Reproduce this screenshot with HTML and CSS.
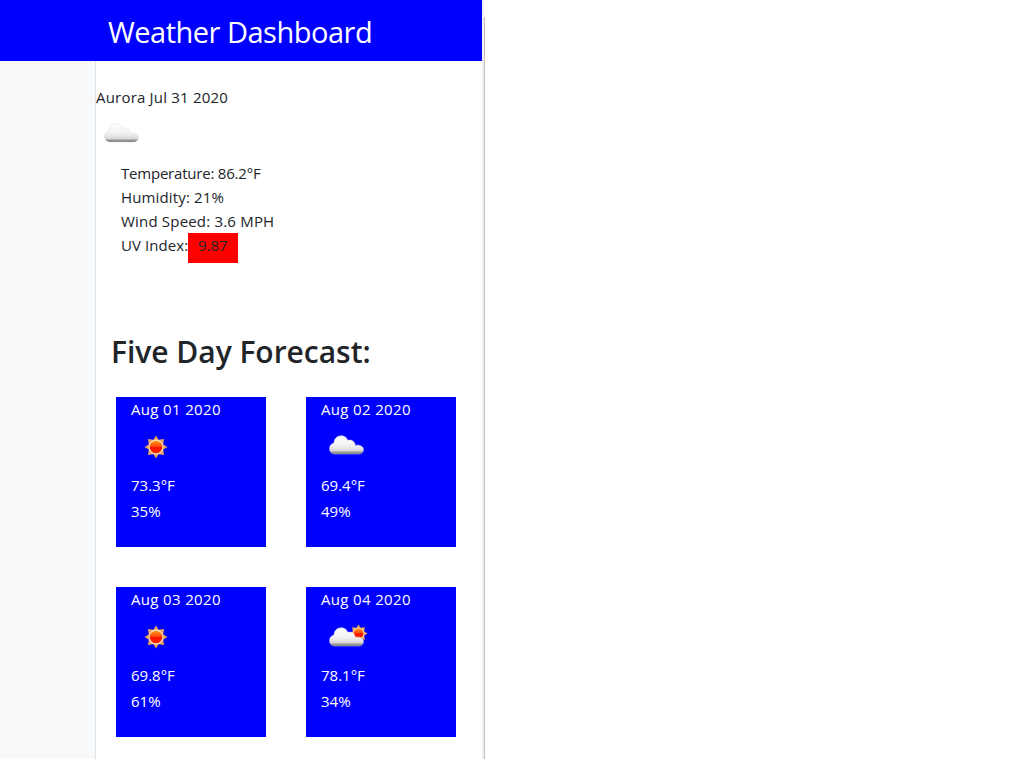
FILE: index.html
```html
<!DOCTYPE html>
<html lang="en">
<head>
<meta charset="utf-8">
<title>Weather Dashboard</title>
<link rel="stylesheet" href="styles.css">
</head>
<body>
<svg class="defs" width="0" height="0" aria-hidden="true">
  <defs>
    <linearGradient id="cloudFill" x1="0" y1="0" x2="0" y2="1">
      <stop offset="0" stop-color="#fff"/>
      <stop offset=".5" stop-color="#f3f3f3"/>
      <stop offset=".8" stop-color="#dcdcdc"/>
      <stop offset=".9" stop-color="#a0a0a0"/>
      <stop offset="1" stop-color="#606060"/>
    </linearGradient>
    <linearGradient id="sunFill" x1="0" y1="0" x2="0" y2="1">
      <stop offset="0" stop-color="#ff9a20"/>
      <stop offset=".45" stop-color="#ff4a08"/>
      <stop offset=".55" stop-color="#fa1000"/>
      <stop offset="1" stop-color="#ff2a00"/>
    </linearGradient>
    <symbol id="cloud" viewBox="0 0 35 20">
      <path d="M6 19C2.500 19 .5 16.500 .5 13.500C.5 10.500 2.500 8.500 5 8C5 3.500 8.500 .7 12.200 .7C15.500 .7 17.800 2.600 18.800 5.300C22.500 4.200 26 6.500 26.300 10.500C30.500 9.300 34.500 11.300 34.500 14.500C34.500 17.200 32.500 19 29.500 19Z" fill="url(#cloudFill)" stroke="#d8d8d8" stroke-width=".5"/>
    </symbol>
    <symbol id="sun" viewBox="-12 -12 24 24">
      <path d="M0-11.500 2.500-7.200 8-8 7.200-2.500 11.500 0 7.200 2.500 8 8 2.500 7.200 0 11.500-2.500 7.200-8 8-7.200 2.500-11.500 0-7.200-2.500-8-8-2.500-7.200Z" fill="#e9a25f"/>
      <circle r="7.400" fill="#ffe5b5"/>
      <circle r="6.300" fill="url(#sunFill)"/>
    </symbol>
  </defs>
</svg>
<div class="app">
  <div class="page">
    <header class="header"><h1 class="title">Weather Dashboard</h1></header>
    <div class="body">
      <aside class="sidebar"></aside>
      <main class="main">
        <p class="city">Aurora Jul 31 2020</p>
        <svg class="icon current-icon" viewBox="0 0 50 50"><use href="#cloud" x="8" y="15" width="35" height="20"/></svg>
        <ul class="stats">
          <li class="temperature">Temperature: 86.2°F</li>
          <li class="humidity">Humidity: 21%</li>
          <li class="wind">Wind Speed: 3.6 MPH</li>
          <li class="uv"><span class="uv-label">UV Index:</span><span class="uv-value">9.87</span></li>
        </ul>
        <h2 class="forecast-title">Five Day Forecast:</h2>
        <div class="forecast">
          <section class="card">
            <p class="date">Aug 01 2020</p>
            <svg class="icon" viewBox="0 0 50 50"><use href="#sun" x="13" y="13" width="24" height="24"/></svg>
            <p class="reading">73.3°F</p><p class="reading">35%</p>
          </section>
          <section class="card">
            <p class="date">Aug 02 2020</p>
            <svg class="icon" viewBox="0 0 50 50"><use href="#cloud" x="8" y="13" width="35" height="20"/></svg>
            <p class="reading">69.4°F</p><p class="reading">49%</p>
          </section>
          <section class="card">
            <p class="date">Aug 03 2020</p>
            <svg class="icon" viewBox="0 0 50 50"><use href="#sun" x="13" y="13" width="24" height="24"/></svg>
            <p class="reading">69.8°F</p><p class="reading">61%</p>
          </section>
          <section class="card">
            <p class="date">Aug 04 2020</p>
            <svg class="icon" viewBox="0 0 50 50"><use href="#sun" x="28" y="12" width="19" height="19"/><use href="#cloud" x="8" y="15" width="35" height="20"/></svg>
            <p class="reading">78.1°F</p><p class="reading">34%</p>
          </section>
        </div>
      </main>
    </div>
  </div>
  <div class="edge"></div>
</div>
</body>
</html>
```
FILE: styles.css
```css
* { box-sizing: border-box; }
body {
  margin: 0;
  background: #fff;
  color: #212529;
  font: 15px/24px "Open Sans", "Noto Sans", sans-serif;
}
p, h1, h2, ul { margin: 0; padding: 0; }
li { list-style: none; }
.defs { display: block; }
.app { display: flex; width: 485px; height: 759px; }
.page { display: flex; flex-direction: column; width: 482px; }
.header { height: 61px; padding: 9px 0 0 108px; background: #00f; color: #fff; }
.title { font-size: 29px; line-height: 45px; font-weight: 400; letter-spacing: -.5px; white-space: nowrap; }
.body { display: flex; flex: 1; }
.sidebar { width: 96px; background: #f8f9fb; border-right: 1px solid #dee2e6; }
.main { flex: 1; padding-top: 24px; }
.city { letter-spacing: .2px; }
.edge { width: 3px; background: linear-gradient(#c0c0c0, #c0c0c0) 2px 17px / 1px 100% no-repeat, linear-gradient(90deg, #f0f0f0 2px, #fff 2px); }
.icon { display: block; width: 50px; height: 50px; }
.current-icon { margin-top: -1px; }
.stats { padding: 3px 0 0 25px; white-space: nowrap; }
.temperature { letter-spacing: -.21px; }
.humidity { letter-spacing: .15px; }
.wind { letter-spacing: .19px; }
.uv { display: flex; height: 30px; }
.uv-label { width: 67px; letter-spacing: .08px; }
.uv-value { width: 50px; height: 30px; padding-left: 10px; background: #f00; }
.forecast-title { margin: 70px 0 0 15px; font-size: 30px; line-height: 38px; font-weight: 600; letter-spacing: -.03px; white-space: nowrap; }
.forecast { display: grid; grid-template-columns: 150px 150px; gap: 40px; padding: 26px 0 0 20px; }
.card { height: 150px; padding: 0 0 0 15px; background: #00f; color: #fff; }
.date { padding-bottom: 1px; letter-spacing: .34px; }
.reading { line-height: 26px; }
```
